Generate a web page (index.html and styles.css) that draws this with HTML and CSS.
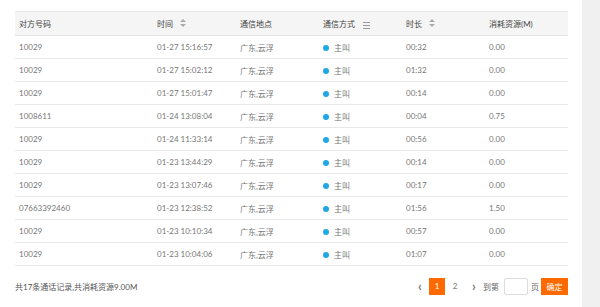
FILE: index.html
```html
<!DOCTYPE html>
<html lang="zh-CN">
<head>
    <meta charset="UTF-8">
    <title>通话记录</title>
    <link rel="stylesheet" href="styles.css">
</head>
<body>
    <div class="page">
        <div class="panel">
            <table class="records">
                <thead>
                    <tr>
                        <th class="col-num">对方号码</th>
                        <th class="col-time">时间 <span class="sort"></span></th>
                        <th class="col-place">通信地点</th>
                        <th class="col-type">通信方式 <span class="filter"></span></th>
                        <th class="col-dur">时长 <span class="sort"></span></th>
                        <th class="col-cost">消耗资源(M)</th>
                    </tr>
                </thead>
                <tbody>
                    <tr><td>10029</td><td>01-27 15:16:57</td><td>广东,云浮</td><td><span class="dot"></span>主叫</td><td>00:32</td><td>0.00</td></tr>
                    <tr><td>10029</td><td>01-27 15:02:12</td><td>广东,云浮</td><td><span class="dot"></span>主叫</td><td>01:32</td><td>0.00</td></tr>
                    <tr><td>10029</td><td>01-27 15:01:47</td><td>广东,云浮</td><td><span class="dot"></span>主叫</td><td>00:14</td><td>0.00</td></tr>
                    <tr><td>1008611</td><td>01-24 13:08:04</td><td>广东,云浮</td><td><span class="dot"></span>主叫</td><td>00:04</td><td>0.75</td></tr>
                    <tr><td>10029</td><td>01-24 11:33:14</td><td>广东,云浮</td><td><span class="dot"></span>主叫</td><td>00:56</td><td>0.00</td></tr>
                    <tr><td>10029</td><td>01-23 13:44:29</td><td>广东,云浮</td><td><span class="dot"></span>主叫</td><td>00:14</td><td>0.00</td></tr>
                    <tr><td>10029</td><td>01-23 13:07:46</td><td>广东,云浮</td><td><span class="dot"></span>主叫</td><td>00:17</td><td>0.00</td></tr>
                    <tr><td>07663392460</td><td>01-23 12:38:52</td><td>广东,云浮</td><td><span class="dot"></span>主叫</td><td>01:56</td><td>1.50</td></tr>
                    <tr><td>10029</td><td>01-23 10:10:34</td><td>广东,云浮</td><td><span class="dot"></span>主叫</td><td>00:57</td><td>0.00</td></tr>
                    <tr><td>10029</td><td>01-23 10:04:06</td><td>广东,云浮</td><td><span class="dot"></span>主叫</td><td>01:07</td><td>0.00</td></tr>
                </tbody>
            </table>
            <div class="footer">
                <div class="summary">共17条通话记录,共消耗资源9.00M</div>
                <div class="pager">
                    <span class="arrow prev">&#8249;</span>
                    <span class="page-num active">1</span>
                    <span class="page-num">2</span>
                    <span class="arrow next">&#8250;</span>
                    <span class="goto">到第</span>
                    <input class="page-input" type="text">
                    <span class="goto">页</span>
                    <button class="confirm">确定</button>
                </div>
            </div>
        </div>
        <div class="side"></div>
    </div>
</body>
</html>
```

FILE: styles.css
```css
body {
    margin: 0;
    background: #ffffff;
    font-family: Lato, "Noto Sans CJK SC", sans-serif;
    font-size: 8px;
    color: #777777;
}
.page {
    display: flex;
    height: 307px;
}
.panel {
    width: 553px;
    padding: 11px 14px 0 15px;
    background: #ffffff;
}
.side {
    flex: 1;
    background: #f0f0f0;
}
.records {
    width: 553px;
    border-collapse: collapse;
    table-layout: fixed;
}
.records th {
    height: 23px;
    background: #f5f5f5;
    color: #444444;
    font-weight: normal;
    text-align: left;
    padding: 0 0 0 4px;
    border-top: 1px solid #e8e8e8;
    border-bottom: 1px solid #e3e3e3;
}
.records td {
    height: 22px;
    padding: 0 0 0 4px;
    border-bottom: 1px solid #e8e8e8;
    white-space: nowrap;
}
.col-num { width: 134px; }
.col-time { width: 79px; }
.col-place { width: 79px; }
.col-type { width: 79px; }
.col-dur { width: 79px; }
.sort {
    display: inline-block;
    position: relative;
    width: 7px;
    height: 9px;
    margin-left: 5px;
    vertical-align: -1px;
}
.sort::before,
.sort::after {
    content: '';
    position: absolute;
    left: 0;
    border-left: 3px solid transparent;
    border-right: 3px solid transparent;
}
.sort::before {
    top: 0;
    border-bottom: 3px solid #aaaaaa;
}
.sort::after {
    bottom: 1px;
    border-top: 3px solid #aaaaaa;
}
.filter {
    display: inline-block;
    width: 7px;
    height: 5px;
    margin-left: 6px;
    border-top: 1px solid #999999;
    border-bottom: 1px solid #999999;
    background: linear-gradient(#999999, #999999) 0 2px / 7px 1px no-repeat;
    vertical-align: -2px;
}
.dot {
    display: inline-block;
    width: 6px;
    height: 6px;
    border-radius: 50%;
    background: #1fa8e8;
    margin: 0 5px 0 0;
    vertical-align: 0;
}
.footer {
    display: flex;
    justify-content: space-between;
    align-items: center;
    margin-top: 12px;
}
.summary {
    color: #555555;
}
.pager {
    display: flex;
    align-items: center;
}
.arrow {
    font-size: 13px;
    font-weight: bold;
    color: #777777;
    width: 10px;
    text-align: center;
    line-height: 17px;
}
.prev { margin-right: 4px; }
.next { margin-left: 4px; margin-right: 4px; }
.page-num {
    width: 16px;
    height: 17px;
    line-height: 17px;
    text-align: center;
    margin-right: 2px;
}
.page-num.active {
    background: #ff6a00;
    color: #ffffff;
}
.goto {
    color: #666666;
}
.page-input {
    width: 22px;
    height: 15px;
    margin: 0 3px 0 5px;
    padding: 0;
    border: 1px solid #dddddd;
    border-radius: 2px;
}
.confirm {
    width: 27px;
    height: 17px;
    margin-left: 2px;
    padding: 0;
    border: none;
    background: #ff6a00;
    color: #ffffff;
    font-family: Lato, "Noto Sans CJK SC", sans-serif;
    font-size: 8px;
}
```
